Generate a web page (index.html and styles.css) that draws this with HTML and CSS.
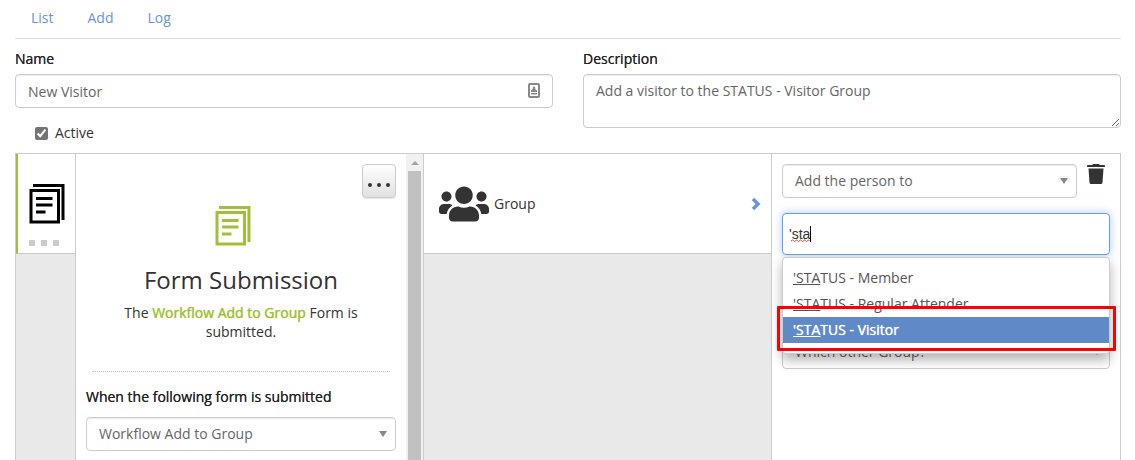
FILE: index.html
```html
<!DOCTYPE html>
<html lang="en">
    <head>
        <meta charset="utf-8">
        <title>New Visitor</title>
        <link rel="stylesheet" href="styles.css">
    </head>
    <body>
        <nav class="tabs">
            <a href="#">List</a>
            <a href="#">Add</a>
            <a href="#">Log</a>
        </nav>
        <form class="details">
            <div class="field">
                <label class="label" for="name">Name</label>
                <div class="control">
                    <input class="box" type="text" id="name" value="New Visitor">
                    <svg class="card" width="12" height="16" viewBox="0 0 12 16">
                        <rect x="1" y="1" width="10" height="13" rx="1" fill="none" stroke="#888" stroke-width="2"/>
                        <path d="M6 3l1.500 2-.5 1 2 1.500v1.500H3V7.500L5 6l-.5-1zM3 10h6v1.500H3z" fill="#888"/>
                    </svg>
                </div>
                <div class="check">
                    <input type="checkbox" id="active" checked>
                    <label for="active">Active</label>
                </div>
            </div>
            <div class="field">
                <label class="label" for="description">Description</label>
                <textarea class="box" id="description">Add a visitor to the STATUS - Visitor Group</textarea>
            </div>
        </form>

        <main class="builder">
            <!-- steps -->
            <section class="steps">
                <div class="step">
                    <svg class="pages" width="36" height="41" viewBox="0 0 36 41">
                        <path d="M4 2.500H34V37M2 7.500H29.500V39H2zM7 15.500H23.500M7 22H23.500M7 29H16.500"/>
                    </svg>
                    <div class="dots"><i></i><i></i><i></i></div>
                </div>
            </section>

            <!-- trigger -->
            <section class="trigger">
                <div class="triggerBody">
                    <button class="more" type="button" aria-label="More">
                        <svg width="24" height="6" viewBox="0 0 24 6">
                            <circle cx="3" cy="3" r="2"/><circle cx="12" cy="3" r="2"/><circle cx="21" cy="3" r="2"/>
                        </svg>
                    </button>
                    <div class="triggerIcon">
                        <svg class="pages green" width="36" height="41" viewBox="0 0 36 41">
                            <path d="M4 2.500H34V37M2 7.500H29.500V39H2zM7 15.500H23.500M7 22H23.500M7 29H16.500"/>
                        </svg>
                    </div>
                    <h2>Form Submission</h2>
                    <p>The <b>Workflow Add to Group</b> Form is submitted.</p>
                    <hr>
                    <label class="label" for="form">When the following form is submitted</label>
                    <div class="control">
                        <select class="box" id="form"><option>Workflow Add to Group</option></select>
                        <span class="arrow"></span>
                    </div>
                </div>
                <div class="scrollbar"><span class="up"></span><span class="thumb"></span></div>
            </section>

            <!-- actions -->
            <section class="actions">
                <div class="action">
                    <svg width="50" height="40" viewBox="0 0 640 512" fill="#333">
                        <path d="M96 224c35.300 0 64-28.700 64-64s-28.700-64-64-64-64 28.700-64 64 28.700 64 64 64zm448 0c35.300 0 64-28.700 64-64s-28.700-64-64-64-64 28.700-64 64 28.700 64 64 64zm32 32h-64c-17.600 0-33.500 7.100-45.100 18.600 40.300 22.100 68.900 62 75.100 109.400h66c17.700 0 32-14.300 32-32v-32c0-35.300-28.700-64-64-64zm-256 0c61.900 0 112-50.100 112-112S381.900 32 320 32 208 82.100 208 144s50.100 112 112 112zm76.800 32h-8.300c-20.800 10-43.900 16-68.500 16s-47.600-6-68.500-16h-8.300C179.600 288 128 339.600 128 403.200V432c0 26.500 21.500 48 48 48h288c26.500 0 48-21.500 48-48v-28.800c0-63.600-51.600-115.200-115.200-115.200zm-223.700-13.400C161.500 263.100 145.600 256 128 256H64c-35.300 0-64 28.700-64 64v32c0 17.700 14.300 32 32 32h65.900c6.300-47.400 34.900-87.300 75.200-109.400z"/>
                    </svg>
                    <span class="actionName">Group</span>
                    <svg width="10" height="14" viewBox="0 0 10 14">
                        <path d="M2 2l5 5-5 5" fill="none" stroke="#6a93e0" stroke-width="3.500"/>
                    </svg>
                </div>
            </section>

            <!-- settings -->
            <section class="settings">
                <div class="mode">
                    <div class="control">
                        <select class="box" aria-label="Action"><option>Add the person to</option></select>
                        <span class="arrow"></span>
                    </div>
                    <button class="trash" type="button" aria-label="Delete">
                        <svg width="18" height="20" viewBox="0 0 18 20" fill="#333">
                            <path d="M6 0h6l.5 1H17q1 0 1 1v1H0V2q0-1 1-1h4.500zM1.500 4.500h15L15.500 18.500q-.2 1.500-1.500 1.500H4q-1.300 0-1.500-1.500z"/>
                        </svg>
                    </button>
                </div>
                <div class="search">
                    <input type="text" class="searchBox" value="'sta" spellcheck="false" aria-label="Search groups">
                    <svg class="typing" width="21" height="17" viewBox="0 0 21 17">
                        <path d="M1 15l1.500-1 2 1.500 2-1.500 2 1.500 2-1.500 2 1.500 2-1.500 2 1.500 2-1.500 1 1" fill="none" stroke="#e0402a"/>
                        <path d="M20.500 0V16" stroke="#000"/>
                    </svg>
                    <ul class="results">
                        <li><u>'STA</u>TUS - Member</li>
                        <li><u>'STA</u>TUS - Regular Attender</li>
                        <li class="selected"><u>'STA</u>TUS - Visitor</li>
                    </ul>
                    <div class="highlight"></div>
                </div>
                <div class="control">
                    <select class="box" aria-label="Other group"><option>Which other Group?</option></select>
                    <span class="arrow"></span>
                </div>
            </section>
        </main>
    </body>
</html>
```

FILE: styles.css
```css
* {
    box-sizing: border-box;
}
html, body {
    height: 100%;
}
body {
    margin: 0;
    padding: 0 14px 0 15px;
    display: flex;
    flex-direction: column;
    overflow: hidden;
    background: #fff;
    color: #333;
    font: 14px/20px "Open Sans", sans-serif;
}
.tabs {
    display: flex;
    gap: 34px;
    padding: 8px 16px 10px;
    border-bottom: 1px solid #ddd;
}
.tabs a {
    color: #6a93e0;
    text-decoration: none;
}
.details {
    display: grid;
    grid-template-columns: 1fr 1fr;
    gap: 30px;
    padding: 10px 0;
}
.label {
    display: block;
    margin-bottom: 5px;
    text-shadow: 0 0 0 #333;
    color: #222;
}
.control {
    position: relative;
    flex: 1;
}
.box {
    display: block;
    width: 100%;
    height: 34px;
    padding: 6px 12px;
    border: 1px solid #ccc;
    border-radius: 4px;
    background: #fff;
    box-shadow: inset 0 1px 1px rgba(0, 0, 0, .08);
    color: #666;
    font: inherit;
    appearance: none;
}
textarea.box {
    height: 54px;
}
.card {
    position: absolute;
    right: 13px;
    top: 9px;
}
.arrow {
    position: absolute;
    right: 9px;
    top: 14px;
    border: 4px solid transparent;
    border-top: 6px solid #888;
    border-bottom: 0;
}
.check {
    display: flex;
    align-items: center;
    gap: 7px;
    margin-top: 15px;
    padding-left: 20px;
}
.check input {
    margin: 0;
    accent-color: #757575;
}

/* builder columns */
.builder {
    flex: 1;
    min-height: 0;
    display: grid;
    grid-template-columns: 60px 1fr 1fr 1fr;
    border: 1px solid #ccc;
    border-bottom: 0;
    background: #e9e9e9;
}
.builder section {
    min-width: 0;
    min-height: 0;
    border-right: 1px solid #ccc;
}
.builder .settings {
    border-right: 0;
}
.step {
    height: 100px;
    padding: 29px 11px 0;
    border-left: 2px solid #a2c037;
    border-bottom: 1px solid #ccc;
    background: #fff;
}
.pages {
    display: block;
    fill: none;
    stroke: #000;
    stroke-width: 3;
}
.pages.green {
    margin: 0 auto;
    stroke: #a2c037;
}
.triggerIcon {
    padding-right: 16px;
}
.dots {
    display: flex;
    gap: 6px;
    margin-top: 16px;
}
.dots i {
    width: 6px;
    height: 6px;
    background: #ccc;
}
.trigger {
    display: flex;
    background: #fff;
}
.triggerBody {
    position: relative;
    flex: 1;
    padding: 51px 10px 0;
    overflow: hidden;
}
.more {
    position: absolute;
    right: 10px;
    top: 10px;
    width: 34px;
    height: 34px;
    padding: 8px 0 0;
    border: 1px solid #ccc;
    border-radius: 4px;
    background: linear-gradient(#fff, #e0e0e0);
    box-shadow: 0 1px 1px rgba(0, 0, 0, .1);
}
.more svg {
    display: block;
    margin: 0 auto;
    fill: #333;
}
.trigger h2 {
    margin: 20px 0 9px;
    font-size: 24px;
    line-height: 28px;
    font-weight: 400;
    text-align: center;
}
.trigger p {
    margin: 0 20px 30px;
    line-height: 19px;
    text-align: center;
}
.trigger p b {
    color: #a2c037;
    font-weight: 400;
    text-shadow: 0 0 1px #a2c037;
}
.trigger hr {
    margin: 0 6px 15px;
    border: 0;
    border-top: 1px dotted #bbb;
}
.trigger .label {
    margin-bottom: 10px;
}
.scrollbar {
    width: 17px;
    display: flex;
    flex-direction: column;
    align-items: center;
    background: #f1f1f1;
}
.up {
    margin: 7px 0 6px;
    border: 4px solid transparent;
    border-bottom-color: #a3a3a3;
    border-top: 0;
}
.thumb {
    flex: 1;
    width: 13px;
    background: #c1c1c1;
}
.action {
    display: flex;
    align-items: center;
    gap: 5px;
    height: 100px;
    padding: 0 10px 0 15px;
    border-bottom: 1px solid #ccc;
    background: #fff;
}
.actionName {
    flex: 1;
}
.settings {
    padding: 10px;
    background: #fff;
}
.mode {
    display: flex;
    align-items: flex-start;
    gap: 10px;
    margin-bottom: 15px;
}
.trash {
    width: 23px;
    padding: 0;
    border: 0;
    background: none;
}
.trash svg {
    display: block;
}
.search {
    position: relative;
    margin-bottom: 80px;
}
.searchBox {
    display: block;
    width: 100%;
    height: 42px;
    padding: 0 6px;
    border: 1px solid #6a9ee8;
    border-radius: 4px;
    box-shadow: 0 0 8px rgba(102, 153, 233, .5);
    color: #333;
    font: 14px "Liberation Sans", sans-serif;
}
.typing {
    position: absolute;
    left: 8px;
    top: 13px;
}
.results {
    position: absolute;
    z-index: 1;
    top: 44px;
    left: 0;
    right: 0;
    margin: 0;
    padding: 7px 0 10px;
    border: 1px solid #ccc;
    border-radius: 4px;
    background: #fff;
    box-shadow: 0 6px 12px rgba(0, 0, 0, .3);
    list-style: none;
    color: #555;
}
.results li {
    padding: 3px 10px;
}
.results .selected {
    background: #5f8ac7;
    color: #fff;
    text-shadow: 0 0 1px #fff;
}
.highlight {
    position: absolute;
    z-index: 2;
    top: 93px;
    left: -5px;
    right: -6px;
    height: 45px;
    border: 3px solid #f00;
    border-radius: 1px;
}
```
